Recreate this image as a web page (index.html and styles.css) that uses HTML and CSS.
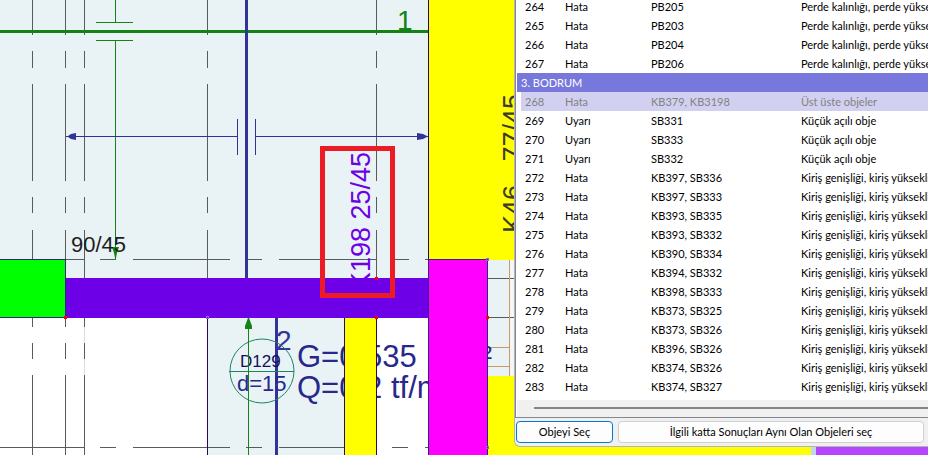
FILE: index.html
```html
<!DOCTYPE html>
<html lang="tr">
<head>
<meta charset="utf-8">
<title>Kalıp Planı</title>
<link rel="stylesheet" href="styles.css">
</head>
<body>
<main class="workspace">
<svg class="plan" viewBox="0 0 928 455" preserveAspectRatio="xMinYMin slice" role="img" aria-label="Kat planı">
  <!-- slabs -->
  <rect width="928" height="455" fill="#e9f3f5"/>
  <rect y="318" width="207" height="137" fill="#fff"/>
  <rect x="377" y="318" width="52" height="137" fill="#fff"/>
  <rect x="510" y="260" width="4" height="116" fill="#f4f7f7"/>

  <!-- dashed guides -->
  <g class="guide">
    <path d="M32.5 0V35M32.5 51V68M32.5 84V181M32.5 197V213M32.5 230V260M32.5 318V327M32.5 343V359M32.5 375V455"/>
    <path d="M65.5 0V35M65.5 51V68M65.5 84V181M65.5 197V213M65.5 230V260M65.5 318V327M65.5 343V359M65.5 375V455"/>
    <path d="M84.5 0V35M84.5 51V68M84.5 84V181M84.5 197V213M84.5 230V278M84.5 318V327M84.5 343V359M84.5 375V455"/>
    <path d="M207.5 0V35M207.5 51V68M207.5 84V181M207.5 197V213M207.5 230V278"/>
    <path d="M376.5 0V35M376.5 51V68M376.5 84V181M376.5 197V213M376.5 230V278"/>
    <path d="M66 259.500H84M100 259.500H116M133 259.500H230M246 259.500H262M279 259.500H376M392 259.500H409M425 259.500H429M488 259.500H514M488 278.500H514M488 317.500H514"/>
    <path d="M0 447.500H84M100 447.500H116M133 447.500H230M246 447.500H262M279 447.500H344M392 447.500H408M425 447.500H429"/>
  </g>
  <path class="faint" d="M84.500 327V343M84.500 359V375"/>
  <path class="stair" d="M509.500 260V376M488 347.500H509M488 366.500H509"/>

  <!-- axis 1 and span marker -->
  <rect y="30" width="429" height="3" fill="#148214"/>
  <path class="axis-green" d="M115.500 0V22M96 22.500H133M96 40.500H133M115.500 41V259"/>
  <path fill="#148214" d="M112 247h7l-2 6-1 5h-1l-1-5z"/>
  <text class="label axis-one" x="397" y="30">1</text>
  <text class="label beam-size" x="71" y="252">90/45</text>

  <!-- axis 2 -->
  <path class="axis-blue" d="M246.500 0V278M276.500 318V455"/>
  <path class="dimension" d="M66 136.500H237M237.500 119V155M255.500 119V155M256 136.500H428"/>
  <path fill="#32329b" d="M67 136h1l3-2 5-1v7l-5-1-3-2zM427 136l-4-2-6-1v7l6-1 4-2z"/>
  <text class="label axis-two" x="276" y="350">2</text>

  <!-- slab tag and loads -->
  <text class="label slab-name" x="240" y="367">D129</text>
  <text class="label slab-depth" x="237" y="391">d=15</text>
  <text class="label load" x="297" y="367">G=0.535</text>
  <text class="label load" x="430" y="367">tf/m²</text>
  <text class="label load" x="297" y="398">Q=0.2 tf/m²</text>
  <g fill="none" stroke="#1e8264"><circle cx="262" cy="371" r="32"/><path class="crisp" d="M229 371.500H294"/></g>
  <path class="axis-green" d="M248.500 326V455"/>
  <path fill="#148214" d="M248 318h1l3 8v3h-7v-3z"/>

  <!-- beams and columns -->
  <text class="label beam-name" transform="translate(370 152) rotate(-90)">K198 25/45</text>
  <rect y="260" width="65" height="57" fill="#0f0"/>
  <path class="edge" d="M0 259.500H65M65.500 259V318M0 317.500H65"/>
  <rect x="66" y="278" width="363" height="40" fill="#6e00e8"/>
  <rect x="345" y="318" width="31" height="137" fill="#ff0"/>
  <rect x="429" width="86" height="260" fill="#ff0"/>
  <rect x="488" y="376" width="323" height="79" fill="#ff0"/>
  <rect x="811" y="440" width="5" height="15" fill="#bfd8ee"/>
  <rect x="816" y="440" width="112" height="15" fill="#b545ff"/>
  <rect x="429" y="260" width="58" height="195" fill="#f0f"/>
  <path class="edge-dark" d="M207.500 318V455M344.500 318V455M376.500 318V455M428.500 0V259"/>
  <path class="edge" d="M428.500 259V455M429 259.500H488M487.500 259V455"/>
  <text class="label neighbor" transform="translate(522 94) rotate(-90)">77/45</text>
  <text class="label neighbor" transform="translate(522 185) rotate(-90)">K46</text>

  <!-- snap nodes -->
  <path fill="#f00" d="M64 316h3v3h-3zM375 277h3v3h-3zM375 316h3v3h-3zM486 316h3v3h-3z"/>
  <path class="node" d="M206.500 316.500h2v2h-2zM486.500 258.500h2v2h-2zM486.500 446.500h2v2h-2z"/>

  <rect x="322.500" y="148.500" width="70" height="147" fill="none" stroke="#ed1c24" stroke-width="5"/>
</svg>

<section class="dialog" aria-label="Sonuçlar">
  <div class="results">
    <table class="grid">
      <colgroup><col class="col-no"><col class="col-kind"><col class="col-object"><col></colgroup>
      <tbody>
        <tr><td>264</td><td>Hata</td><td>PB205</td><td>Perde kalınlığı, perde yüksekliği</td></tr>
        <tr><td>265</td><td>Hata</td><td>PB203</td><td>Perde kalınlığı, perde yüksekliği</td></tr>
        <tr><td>266</td><td>Hata</td><td>PB204</td><td>Perde kalınlığı, perde yüksekliği</td></tr>
        <tr><td>267</td><td>Hata</td><td>PB206</td><td>Perde kalınlığı, perde yüksekliği</td></tr>
        <tr class="floor"><th colspan="4" scope="rowgroup">3. BODRUM</th></tr>
        <tr class="selected"><td>268</td><td>Hata</td><td>KB379, KB3198</td><td>Üst üste objeler</td></tr>
        <tr><td>269</td><td>Uyarı</td><td>SB331</td><td>Küçük açılı obje</td></tr>
        <tr><td>270</td><td>Uyarı</td><td>SB333</td><td>Küçük açılı obje</td></tr>
        <tr><td>271</td><td>Uyarı</td><td>SB332</td><td>Küçük açılı obje</td></tr>
        <tr><td>272</td><td>Hata</td><td>KB397, SB336</td><td>Kiriş genişliği, kiriş yüksekliği</td></tr>
        <tr><td>273</td><td>Hata</td><td>KB397, SB333</td><td>Kiriş genişliği, kiriş yüksekliği</td></tr>
        <tr><td>274</td><td>Hata</td><td>KB393, SB335</td><td>Kiriş genişliği, kiriş yüksekliği</td></tr>
        <tr><td>275</td><td>Hata</td><td>KB393, SB332</td><td>Kiriş genişliği, kiriş yüksekliği</td></tr>
        <tr><td>276</td><td>Hata</td><td>KB390, SB334</td><td>Kiriş genişliği, kiriş yüksekliği</td></tr>
        <tr><td>277</td><td>Hata</td><td>KB394, SB332</td><td>Kiriş genişliği, kiriş yüksekliği</td></tr>
        <tr><td>278</td><td>Hata</td><td>KB398, SB333</td><td>Kiriş genişliği, kiriş yüksekliği</td></tr>
        <tr><td>279</td><td>Hata</td><td>KB373, SB325</td><td>Kiriş genişliği, kiriş yüksekliği</td></tr>
        <tr><td>280</td><td>Hata</td><td>KB373, SB326</td><td>Kiriş genişliği, kiriş yüksekliği</td></tr>
        <tr><td>281</td><td>Hata</td><td>KB396, SB326</td><td>Kiriş genişliği, kiriş yüksekliği</td></tr>
        <tr><td>282</td><td>Hata</td><td>KB374, SB326</td><td>Kiriş genişliği, kiriş yüksekliği</td></tr>
        <tr><td>283</td><td>Hata</td><td>KB374, SB327</td><td>Kiriş genişliği, kiriş yüksekliği</td></tr>
      </tbody>
    </table>
    <div class="scrollbar"><div class="thumb"></div></div>
  </div>
  <div class="actions">
    <button class="button primary" type="button">Objeyi Seç</button>
    <button class="button wide" type="button">İlgili katta Sonuçları Aynı Olan Objeleri seç</button>
  </div>
</section>
</main>
</body>
</html>
```
FILE: styles.css
```css
* { box-sizing: border-box; }

body {
  margin: 0;
  font-family: Lato, "Liberation Sans", sans-serif;
  font-size: 11px;
  color: #000;
}

.workspace {
  position: relative;
  height: 100vh;
  overflow: hidden;
}

/* Plan drawing */
.plan {
  display: block;
  width: 100%;
  height: 100%;
}

.plan rect,
.crisp { shape-rendering: crispEdges; }

.guide, .faint, .stair, .axis-green, .axis-blue, .dimension, .edge, .edge-dark, .node {
  fill: none;
  stroke-width: 1;
  shape-rendering: crispEdges;
}

.guide { stroke: #5a5a5a; }
.faint { stroke: #dcd8f0; }
.stair { stroke: #cd9664; }
.axis-green { stroke: #148214; }
.axis-blue { stroke: #32329b; stroke-width: 3; }
.dimension { stroke: #32329b; }
.edge { stroke: #28287d; }
.edge-dark { stroke: #28085a; }
.node { stroke: #9664c8; }

.label { font-family: "Liberation Sans", Arial, sans-serif; }
.axis-one { font-size: 28px; fill: #148214; }
.axis-two { font-size: 28px; fill: #32329b; }
.beam-size { font-size: 22px; fill: #1e1e1e; }
.slab-name { font-size: 17px; fill: #140f5a; }
.slab-depth { font-size: 22px; fill: #28288c; }
.load { font-size: 31px; fill: #28288c; }
.beam-name { font-size: 27px; fill: #6e00e8; text-anchor: end; }
.neighbor { font-size: 27px; fill: #3c3c28; text-anchor: end; }

/* Results dialog */
.dialog {
  position: absolute;
  top: 0;
  left: 514px;
  right: 0;
  padding-bottom: 3px;
  overflow: hidden;
  background: #f0f0f0;
  border-left: 1px solid #b4b4b4;
  border-bottom: 1px solid #b4b4b4;
  border-bottom-left-radius: 6px;
}

.results {
  padding-left: 1px;
  overflow: hidden;
  background: #fff;
  border-left: 1px solid #828790;
  border-bottom: 1px solid #828790;
}

.grid {
  width: 100%;
  margin-top: -3px;
  table-layout: fixed;
  border-collapse: separate;
  border-spacing: 0;
}

.col-no { width: 44px; }
.col-kind { width: 86px; }
.col-object { width: 150px; }

.grid td,
.grid th {
  height: 19px;
  padding: 0 0 0 4px;
  overflow: hidden;
  line-height: 19px;
  font-weight: 400;
  text-align: left;
  white-space: nowrap;
}

.grid td:first-child { border-left: 4px solid #fff; }

.floor th {
  background: #7878dc;
  color: #fff;
}

.selected td {
  background: #d2d0f0;
  color: #828282;
}

.scrollbar {
  margin-top: 4px;
  padding: 7px 0 8px 17px;
  background: #f0f0f0;
}

.thumb {
  height: 2px;
  background: #858585;
}

.actions {
  display: flex;
  gap: 5px;
  padding: 3px 4px 0 1px;
}

.button {
  height: 22px;
  padding: 0 8px;
  font: inherit;
  line-height: 20px;
  color: #000;
  white-space: nowrap;
  background: #fdfdfd;
  border: 1px solid #d0d0d0;
  border-radius: 4px;
}

.primary {
  width: 97px;
  border-color: #0078d4;
}

.wide { flex: 1; }
```
